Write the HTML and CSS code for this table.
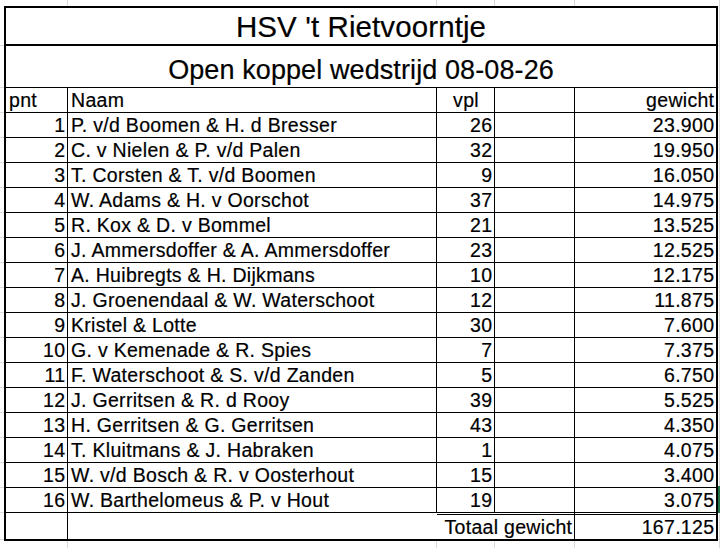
FILE: index.html
```html
<!DOCTYPE html>
<html lang="nl">
<head>
<meta charset="utf-8">
<title>HSV 't Rietvoorntje</title>
<link rel="stylesheet" href="styles.css">
</head>
<body>
<div class="sheet">
  <div class="cell title">HSV 't Rietvoorntje</div>
  <div class="cell subtitle">Open koppel wedstrijd 08-08-26</div>

  <div class="cell">pnt</div><div class="cell">Naam</div><div class="cell c">vpl</div><div class="cell"></div><div class="cell r last">gewicht</div>

  <div class="cell r">1</div><div class="cell">P. v/d Boomen &amp; H. d Bresser</div><div class="cell r">26</div><div class="cell"></div><div class="cell r last">23.900</div>
  <div class="cell r">2</div><div class="cell">C. v Nielen &amp; P. v/d Palen</div><div class="cell r">32</div><div class="cell"></div><div class="cell r last">19.950</div>
  <div class="cell r">3</div><div class="cell">T. Corsten &amp; T. v/d Boomen</div><div class="cell r">9</div><div class="cell"></div><div class="cell r last">16.050</div>
  <div class="cell r">4</div><div class="cell">W. Adams &amp; H. v Oorschot</div><div class="cell r">37</div><div class="cell"></div><div class="cell r last">14.975</div>
  <div class="cell r">5</div><div class="cell">R. Kox &amp; D. v Bommel</div><div class="cell r">21</div><div class="cell"></div><div class="cell r last">13.525</div>
  <div class="cell r">6</div><div class="cell">J. Ammersdoffer &amp; A. Ammersdoffer</div><div class="cell r">23</div><div class="cell"></div><div class="cell r last">12.525</div>
  <div class="cell r">7</div><div class="cell">A. Huibregts &amp; H. Dijkmans</div><div class="cell r">10</div><div class="cell"></div><div class="cell r last">12.175</div>
  <div class="cell r">8</div><div class="cell">J. Groenendaal &amp; W. Waterschoot</div><div class="cell r">12</div><div class="cell"></div><div class="cell r last">11.875</div>
  <div class="cell r">9</div><div class="cell">Kristel &amp; Lotte</div><div class="cell r">30</div><div class="cell"></div><div class="cell r last">7.600</div>
  <div class="cell r">10</div><div class="cell">G. v Kemenade &amp; R. Spies</div><div class="cell r">7</div><div class="cell"></div><div class="cell r last">7.375</div>
  <div class="cell r">11</div><div class="cell">F. Waterschoot &amp; S. v/d Zanden</div><div class="cell r">5</div><div class="cell"></div><div class="cell r last">6.750</div>
  <div class="cell r">12</div><div class="cell">J. Gerritsen &amp; R. d Rooy</div><div class="cell r">39</div><div class="cell"></div><div class="cell r last">5.525</div>
  <div class="cell r">13</div><div class="cell">H. Gerritsen &amp; G. Gerritsen</div><div class="cell r">43</div><div class="cell"></div><div class="cell r last">4.350</div>
  <div class="cell r">14</div><div class="cell">T. Kluitmans &amp; J. Habraken</div><div class="cell r">1</div><div class="cell"></div><div class="cell r last">4.075</div>
  <div class="cell r">15</div><div class="cell">W. v/d Bosch &amp; R. v Oosterhout</div><div class="cell r">15</div><div class="cell"></div><div class="cell r last">3.400</div>
  <div class="cell r">16</div><div class="cell">W. Barthelomeus &amp; P. v Hout</div><div class="cell r">19</div><div class="cell"></div><div class="cell r last">3.075</div>

  <div class="cell tot"></div><div class="cell tot open"></div><div class="cell tot r label">Totaal gewicht</div><div class="cell tot r last dbl">167.125</div>
</div>
</body>
</html>
```

FILE: styles.css
```css
* {
  box-sizing: border-box;
}

html,
body {
  margin: 0;
  padding: 0;
}

body {
  position: relative;
  width: 720px;
  height: 548px;
  overflow: hidden;
  font-family: "Liberation Sans", Arial, sans-serif;
  color: #000;
  background-color: #fff;
  background-image:
    linear-gradient(#dadada, #dadada),
    linear-gradient(#dadada, #dadada),
    linear-gradient(#dadada, #dadada),
    linear-gradient(#dadada, #dadada),
    linear-gradient(#dadada, #dadada),
    linear-gradient(#dadada, #dadada),
    linear-gradient(#dadada, #dadada),
    repeating-linear-gradient(to bottom, #dadada 0 1px, transparent 1px 25px),
    linear-gradient(#dadada, #dadada);
  background-position:
    67px 0,
    436px 0,
    494px 0,
    574px 0,
    719px 0,
    0 45px,
    0 87px,
    0 112px,
    0 539px;
  background-size:
    1px 100%,
    1px 100%,
    1px 100%,
    1px 100%,
    1px 100%,
    100% 1px,
    100% 1px,
    100% 401px,
    100% 1px;
  background-repeat: no-repeat;
}

/* Excel selection marker peeking at the right edge */
body::after {
  content: "";
  position: absolute;
  left: 718px;
  top: 486px;
  width: 2px;
  height: 27px;
  background: #217346;
}

.sheet {
  margin: 6px 0 0 4px;
  width: 714px;
  border: 2px solid #000;
  background: #fff;
  display: grid;
  grid-template-columns: 62px 369px 58px 80px 141px;
  grid-template-rows: 38px 42px 25px repeat(16, 25px) 26px;
}

.cell {
  display: flex;
  align-items: flex-end;
  justify-content: flex-start;
  border-right: 1px solid #000;
  border-bottom: 1px solid #000;
  padding: 0 2px 1px 3px;
  font-size: 19.5px;
  line-height: 21px;
  letter-spacing: 0.3px;
  -webkit-text-stroke: 0.2px #000;
  white-space: nowrap;
  overflow: hidden;
}

.r {
  justify-content: flex-end;
  padding-right: 1.7px;
}

.c {
  justify-content: center;
}

.last {
  border-right: none;
}

.title {
  grid-column: 1 / -1;
  justify-content: center;
  border-right: none;
  border-bottom: 2px solid #000;
  padding: 0;
  font-size: 29.5px;
  line-height: 34px;
  letter-spacing: 0.1px;
}

.subtitle {
  grid-column: 1 / -1;
  justify-content: center;
  border-right: none;
  padding: 0 0 1px;
  font-size: 27px;
  line-height: 31px;
  letter-spacing: 0.1px;
}

.tot {
  border-bottom: none;
}

.open {
  border-right: none;
}

.label {
  grid-column: span 2;
  box-shadow: inset 0 1px 0 #fff, inset 0 2px 0 #000;
}

.dbl {
  box-shadow: inset 0 1px 0 #fff, inset 0 2px 0 #000;
}
```
